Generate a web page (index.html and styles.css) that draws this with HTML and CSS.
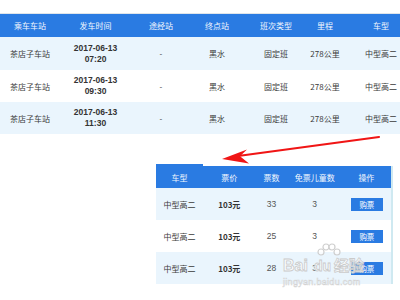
FILE: index.html
```html
<!DOCTYPE html>
<html lang="zh">
<head>
<meta charset="utf-8">
<title>车次列表</title>
<link rel="stylesheet" href="styles.css">
</head>
<body>
<div class="page">
  <div class="top-wrap">
    <table class="trips">
      <colgroup>
        <col class="c1"><col class="c2"><col class="c3"><col class="c4"><col class="c5"><col class="c6"><col class="c7">
      </colgroup>
      <thead>
        <tr><th>乘车车站</th><th>发车时间</th><th>途经站</th><th>终点站</th><th>班次类型</th><th>里程</th><th>车型</th></tr>
      </thead>
      <tbody>
        <tr class="alt"><td>茶店子车站</td><td class="time">2017-06-13<br>07:20</td><td>-</td><td>黑水</td><td>固定班</td><td>278公里</td><td>中型高二</td></tr>
        <tr><td>茶店子车站</td><td class="time">2017-06-13<br>09:30</td><td>-</td><td>黑水</td><td>固定班</td><td>278公里</td><td>中型高二</td></tr>
        <tr class="alt"><td>茶店子车站</td><td class="time">2017-06-13<br>11:30</td><td>-</td><td>黑水</td><td>固定班</td><td>278公里</td><td>中型高二</td></tr>
      </tbody>
    </table>
  </div>

  <div class="detail-wrap">
    <table class="tickets">
      <colgroup>
        <col class="d1"><col class="d2"><col class="d3"><col class="d4"><col class="d5">
      </colgroup>
      <thead>
        <tr><th class="first">车型</th><th>票价</th><th>票数</th><th>免票儿童数</th><th>操作</th></tr>
      </thead>
      <tbody>
        <tr class="alt"><td>中型高二</td><td class="price">103元</td><td>33</td><td>3</td><td><span class="buy">购票</span></td></tr>
        <tr><td>中型高二</td><td class="price">103元</td><td>25</td><td>3</td><td><span class="buy">购票</span></td></tr>
        <tr class="alt"><td>中型高二</td><td class="price">103元</td><td>28</td><td>3</td><td><span class="buy">购票</span></td></tr>
      </tbody>
    </table>
  </div>

  <svg class="arrow" width="400" height="300" viewBox="0 0 400 300">
    <line x1="379" y1="137" x2="238" y2="156" stroke="#f01515" stroke-width="2.2" stroke-linecap="round"/>
    <polygon points="222,159 247,149.5 240,156.3 249,163.5" fill="#f01515"/>
  </svg>

  <div class="watermark">
    <svg class="paw" width="26" height="14" viewBox="0 0 26 14">
      <circle cx="5" cy="9" r="3" fill="rgba(255,255,255,0.7)" stroke="#cfcfcf" stroke-width="1.2"/>
      <circle cx="10" cy="4" r="3" fill="rgba(255,255,255,0.7)" stroke="#cfcfcf" stroke-width="1.2"/>
      <circle cx="16" cy="4" r="3" fill="rgba(255,255,255,0.7)" stroke="#cfcfcf" stroke-width="1.2"/>
      <circle cx="21" cy="9" r="3" fill="rgba(255,255,255,0.7)" stroke="#cfcfcf" stroke-width="1.2"/>
    </svg>
    <div class="wm-main"><span class="wm-bai">Bai</span><span class="wm-du">du</span><span class="wm-cn">经验</span></div>
    <div class="wm-url">jingyan.baidu.com</div>
  </div>
</div>
</body>
</html>
```

FILE: styles.css
```css
html, body {
  margin: 0;
  padding: 0;
  background: #ffffff;
}

.page {
  position: relative;
  width: 400px;
  height: 300px;
  overflow: hidden;
  font-family: "Noto Sans CJK SC", "Noto Sans", "Liberation Sans", sans-serif;
  color: #3a3a3a;
  padding-top: 13px;
  box-sizing: border-box;
}

.top-wrap {
  width: 400px;
  overflow: hidden;
  border-top: 1px solid #dfe5ea;
}

table {
  border-collapse: collapse;
  border-spacing: 0;
  table-layout: fixed;
}

th, td {
  padding: 0;
  text-align: center;
  vertical-align: middle;
  white-space: nowrap;
}

th {
  background: #2a7be2;
  color: #f2f7fe;
  font-weight: normal;
  font-size: 8px;
}

td {
  font-size: 8px;
}

tr.alt td {
  background: #eaf5fd;
}

.trips {
  width: 421px;
}

.trips th {
  height: 23px;
}

.trips tbody tr:first-child td {
  height: 33px;
}

.trips tbody tr td {
  height: 32px;
}

.c1 { width: 60px; }
.c2 { width: 71px; }
.c3 { width: 60px; }
.c4 { width: 52px; }
.c5 { width: 66px; }
.c6 { width: 32px; }
.c7 { width: 80px; }

.time {
  font-family: "Liberation Sans", "Noto Sans CJK SC", sans-serif;
  font-weight: bold;
  font-size: 8.5px;
  line-height: 11px;
  color: #333;
}

.detail-wrap {
  margin-left: 156px;
  margin-top: 32px;
}

.tickets {
  width: 237px;
  border-right: 2px solid #cfe9f1;
}

.tickets th {
  height: 22px;
}

.tickets th.first {
  box-shadow: 0 -2px 0 #2a7be2;
}

.tickets td {
  height: 32px;
}

.d1 { width: 47px; }
.d2 { width: 52px; }
.d3 { width: 32px; }
.d4 { width: 54px; }
.d5 { width: 50px; }

.price {
  font-weight: bold;
  color: #333;
}

.tickets td:nth-child(3),
.tickets td:nth-child(4) {
  color: #555;
  font-family: "Liberation Sans", "Noto Sans CJK SC", sans-serif;
  font-size: 8.5px;
}

.buy {
  display: inline-block;
  width: 32px;
  height: 13px;
  line-height: 13px;
  background: #2a7be2;
  color: #ffffff;
  font-size: 7.5px;
  margin-left: 1px;
}

.arrow {
  position: absolute;
  left: 0;
  top: 0;
  pointer-events: none;
}

.watermark {
  position: absolute;
  left: 283px;
  top: 243px;
  width: 92px;
  pointer-events: none;
  font-family: "Liberation Sans", "Noto Sans CJK SC", sans-serif;
}

.paw {
  display: block;
  margin-left: 33px;
}

.wm-main {
  display: flex;
  align-items: baseline;
  font-size: 16px;
  font-weight: bold;
  line-height: 16px;
  color: rgba(255, 255, 255, 0.85);
  -webkit-text-stroke: 0.8px #cacaca;
}

.wm-du {
  margin-left: 6px;
  font-size: 14px;
}

.wm-cn {
  margin-left: 3px;
  font-family: "Noto Sans CJK SC", sans-serif;
  font-size: 15px;
}

.wm-url {
  font-size: 9px;
  line-height: 10px;
  margin-top: 3px;
  color: rgba(255, 255, 255, 0.8);
  -webkit-text-stroke: 0.5px #d2d2d2;
  letter-spacing: 0.3px;
}
```
